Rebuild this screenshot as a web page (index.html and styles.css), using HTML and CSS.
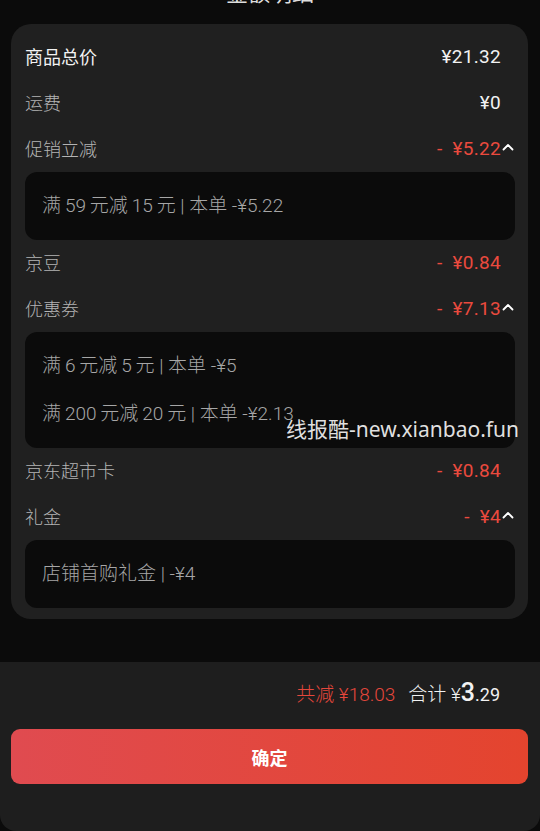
FILE: index.html
```html
<!DOCTYPE html>
<html>
    <head>
        <meta charset="UTF-8">
        <meta name="viewport" content="width=device-width, initial-scale=1.0">
        <title>金额明细</title>
        <link rel="stylesheet" href="styles.css">
    </head>

    <body>
        <div class="page">
            <div class="title">金额明细</div>

            <div class="card">
                <div class="row">
                    <span class="label main">商品总价</span>
                    <span class="value">¥21.32</span>
                    <span class="arrow"></span>
                </div>
                <div class="row">
                    <span class="label">运费</span>
                    <span class="value">¥0</span>
                    <span class="arrow"></span>
                </div>
                <div class="row">
                    <span class="label">促销立减</span>
                    <span class="value minus">-&nbsp; ¥5.22</span>
                    <span class="arrow">
                        <svg width="12" height="8" viewBox="0 0 12 8"><polyline points="1.5,6.5 6,2 10.5,6.5" fill="none" stroke="#fff" stroke-width="1.8" stroke-linecap="round" stroke-linejoin="round"/></svg>
                    </span>
                </div>
                <div class="detail">
                    <div class="line">满&thinsp;59&thinsp;元减&thinsp;15&thinsp;元 | 本单 -¥5.22</div>
                </div>
                <div class="row">
                    <span class="label">京豆</span>
                    <span class="value minus">-&nbsp; ¥0.84</span>
                    <span class="arrow"></span>
                </div>
                <div class="row">
                    <span class="label">优惠券</span>
                    <span class="value minus">-&nbsp; ¥7.13</span>
                    <span class="arrow">
                        <svg width="12" height="8" viewBox="0 0 12 8"><polyline points="1.5,6.5 6,2 10.5,6.5" fill="none" stroke="#fff" stroke-width="1.8" stroke-linecap="round" stroke-linejoin="round"/></svg>
                    </span>
                </div>
                <div class="detail">
                    <div class="line">满&thinsp;6&thinsp;元减&thinsp;5&thinsp;元 | 本单 -¥5</div>
                    <div class="line">满&thinsp;200&thinsp;元减&thinsp;20&thinsp;元 | 本单 -¥2.13</div>
                </div>
                <div class="row">
                    <span class="label">京东超市卡</span>
                    <span class="value minus">-&nbsp; ¥0.84</span>
                    <span class="arrow"></span>
                </div>
                <div class="row">
                    <span class="label">礼金</span>
                    <span class="value minus">-&nbsp; ¥4</span>
                    <span class="arrow">
                        <svg width="12" height="8" viewBox="0 0 12 8"><polyline points="1.5,6.5 6,2 10.5,6.5" fill="none" stroke="#fff" stroke-width="1.8" stroke-linecap="round" stroke-linejoin="round"/></svg>
                    </span>
                </div>
                <div class="detail">
                    <div class="line">店铺首购礼金 | -¥4</div>
                </div>
            </div>

            <div class="footer">
                <div class="summary">
                    <span class="saved">共减 ¥18.03</span>
                    <span class="total">合计 ¥<b>3</b><small>.29</small></span>
                </div>
                <button class="confirm">确定</button>
            </div>

            <div class="watermark">线报酷-new.xianbao.fun</div>
        </div>
    </body>
</html>
```

FILE: styles.css
```css
body {
    margin: 0;
    background-color: #0b0b0b;
    font-family: Roboto, "Noto Sans", "Noto Sans CJK SC", sans-serif;
    color: #f0f0f0;
}
.page {
    position: relative;
    display: flex;
    flex-direction: column;
    width: 540px;
    height: 831px;
    overflow: hidden;
}
.title {
    height: 24px;
    margin-top: -18px;
    margin-bottom: 18px;
    font-size: 22px;
    line-height: 24px;
    text-align: center;
    color: #ddd;
}
.card {
    margin: 0 12px 0 11px;
    padding: 10px 13px 11px 14px;
    background-color: #202020;
    border-radius: 20px;
}
.row {
    display: flex;
    align-items: center;
    box-sizing: border-box;
    height: 46px;
    padding-bottom: 2px;
    font-size: 18px;
}
.label {
    flex: 1;
    color: #b4b4b4;
    font-weight: 300;
}
.label.main {
    color: #f2f2f2;
    font-weight: 400;
}
.value {
    color: #f2f2f2;
    font-size: 19px;
    letter-spacing: 0.3px;
}
.value.minus {
    color: #ea4a3e;
}
.arrow {
    display: flex;
    justify-content: center;
    align-items: center;
    width: 14px;
    height: 14px;
    padding-bottom: 3px;
}
.detail {
    padding: 10px 17px;
    background-color: #0b0b0b;
    border-radius: 12px;
}
.line {
    height: 48px;
    line-height: 48px;
    font-size: 19px;
    color: #a6a6a6;
    font-weight: 300;
}
.footer {
    margin-top: auto;
    height: 169px;
    box-sizing: border-box;
    padding: 14px 12px 0 11px;
    background-color: #1e1e1e;
    border-bottom-left-radius: 16px;
    border-bottom-right-radius: 16px;
}
.summary {
    display: flex;
    justify-content: flex-end;
    align-items: baseline;
    gap: 13px;
    height: 34px;
    line-height: 34px;
    padding-right: 28px;
    font-size: 19px;
}
.saved {
    color: #e5473c;
    font-weight: 300;
}
.total {
    color: #f2f2f2;
    font-weight: 300;
}
.total b {
    font-size: 25px;
    font-weight: 500;
}
.total small {
    font-size: 18px;
    font-weight: 400;
}
.confirm {
    display: block;
    width: 100%;
    height: 55px;
    margin-top: 19px;
    border: none;
    border-radius: 9px;
    background: linear-gradient(90deg, #e04b50, #e4442e);
    color: #fff;
    font-family: "Noto Sans CJK SC", sans-serif;
    font-size: 18px;
    font-weight: 700;
}
.watermark {
    position: absolute;
    left: 286px;
    top: 413px;
    font-family: "Noto Sans", "Noto Sans CJK SC", sans-serif;
    font-size: 21px;
    color: rgba(255, 255, 255, 0.88);
    white-space: nowrap;
}
```
